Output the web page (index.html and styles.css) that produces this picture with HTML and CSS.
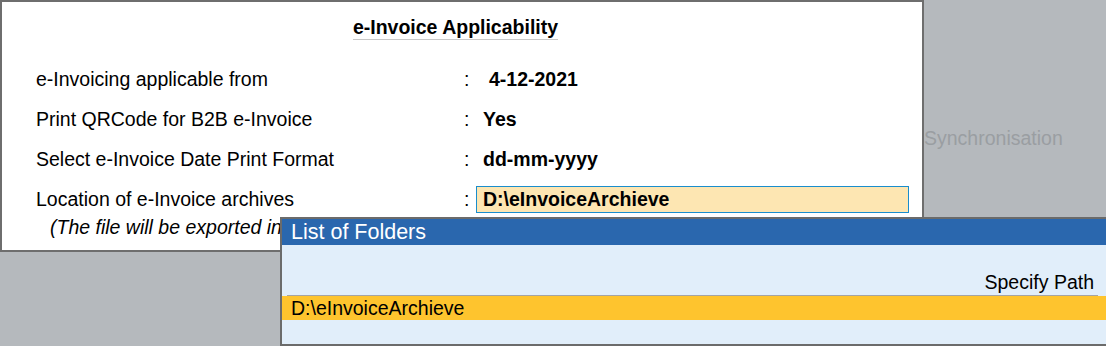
FILE: index.html
```html
<!DOCTYPE html>
<html>
<head>
<meta charset="utf-8">
<link rel="stylesheet" href="styles.css">
</head>
<body>
<div class="screen">
  <div class="panel">
    <div class="title-wrap"><span class="title">e-Invoice Applicability</span></div>
    <div class="rows">
      <div class="row"><span class="label">e-Invoicing applicable from</span><span class="colon">:</span><span class="value date">4-12-2021</span></div>
      <div class="row"><span class="label">Print QRCode for B2B e-Invoice</span><span class="colon">:</span><span class="value">Yes</span></div>
      <div class="row"><span class="label">Select e-Invoice Date Print Format</span><span class="colon">:</span><span class="value">dd-mm-yyyy</span></div>
      <div class="row"><span class="label">Location of e-Invoice archives</span><span class="colon">:</span><span class="value input">D:\eInvoiceArchieve</span></div>
      <div class="note">(The file will be exported in JSON and PDF format)</div>
    </div>
  </div>
  <div class="side"><span class="sync">Synchronisation</span></div>
</div>
<div class="popup">
  <div class="popup-head">List of Folders</div>
  <div class="popup-body">
    <div class="spec">Specify Path</div>
    <div class="item sel">D:\eInvoiceArchieve</div>
  </div>
</div>
</body>
</html>
```
FILE: styles.css
```css
html, body {
  margin: 0;
  padding: 0;
}
body {
  width: 1106px;
  height: 346px;
  overflow: hidden;
  background: #b5b9bd;
  font-family: "Liberation Sans", Arial, sans-serif;
  font-size: 19.5px;
  color: #000;
  position: relative;
}
.screen {
  display: flex;
  align-items: flex-start;
}
.panel {
  box-sizing: border-box;
  width: 924px;
  height: 252px;
  background: #fff;
  border: 2px solid #6e6e6e;
  display: flex;
  flex-direction: column;
  overflow: hidden;
}
.title-wrap {
  display: flex;
  justify-content: center;
  padding-top: 14px;
  padding-right: 13px;
}
.title {
  font-weight: bold;
  line-height: 22px;
  border-bottom: 1px solid #c8c8c8;
  padding-bottom: 1px;
}
.rows {
  padding-top: 19px;
  padding-left: 34px;
  display: flex;
  flex-direction: column;
}
.row {
  display: flex;
  align-items: center;
  height: 40px;
}
.label {
  width: 428px;
}
.colon {
  width: 12px;
}
.value {
  font-weight: bold;
  padding-left: 7px;
}
.value.date {
  padding-left: 13px;
}
.input {
  box-sizing: border-box;
  width: 433px;
  height: 27px;
  line-height: 25px;
  background: #fde6b2;
  border: 1px solid #1a8dcc;
  padding-left: 6px;
}
.note {
  font-style: italic;
  padding-left: 14px;
  margin-top: -3px;
  line-height: 22px;
}
.side {
  flex: 1;
  padding-top: 127px;
}
.sync {
  color: #9a9ea2;
  line-height: 22px;
}
.popup {
  position: absolute;
  left: 280px;
  top: 217px;
  width: 826px;
  height: 129px;
  box-sizing: border-box;
  border: 2px solid #6b6b6b;
  border-right: none;
  background: #e1eefa;
  display: flex;
  flex-direction: column;
}
.popup-head {
  background: #2a67ae;
  color: #fff;
  font-size: 21.5px;
  height: 26px;
  line-height: 26px;
  padding-left: 9px;
}
.popup-body {
  flex: 1;
  display: flex;
  flex-direction: column;
}
.spec {
  margin-top: 26px;
  height: 24px;
  line-height: 22px;
  text-align: right;
  padding-right: 4px;
  border-bottom: 1px solid #a4a4a4;
  margin-left: 5px;
  margin-right: 8px;
}
.item {
  height: 24px;
  line-height: 24px;
  padding-left: 9px;
}
.item.sel {
  background: #fec42e;
}
```
